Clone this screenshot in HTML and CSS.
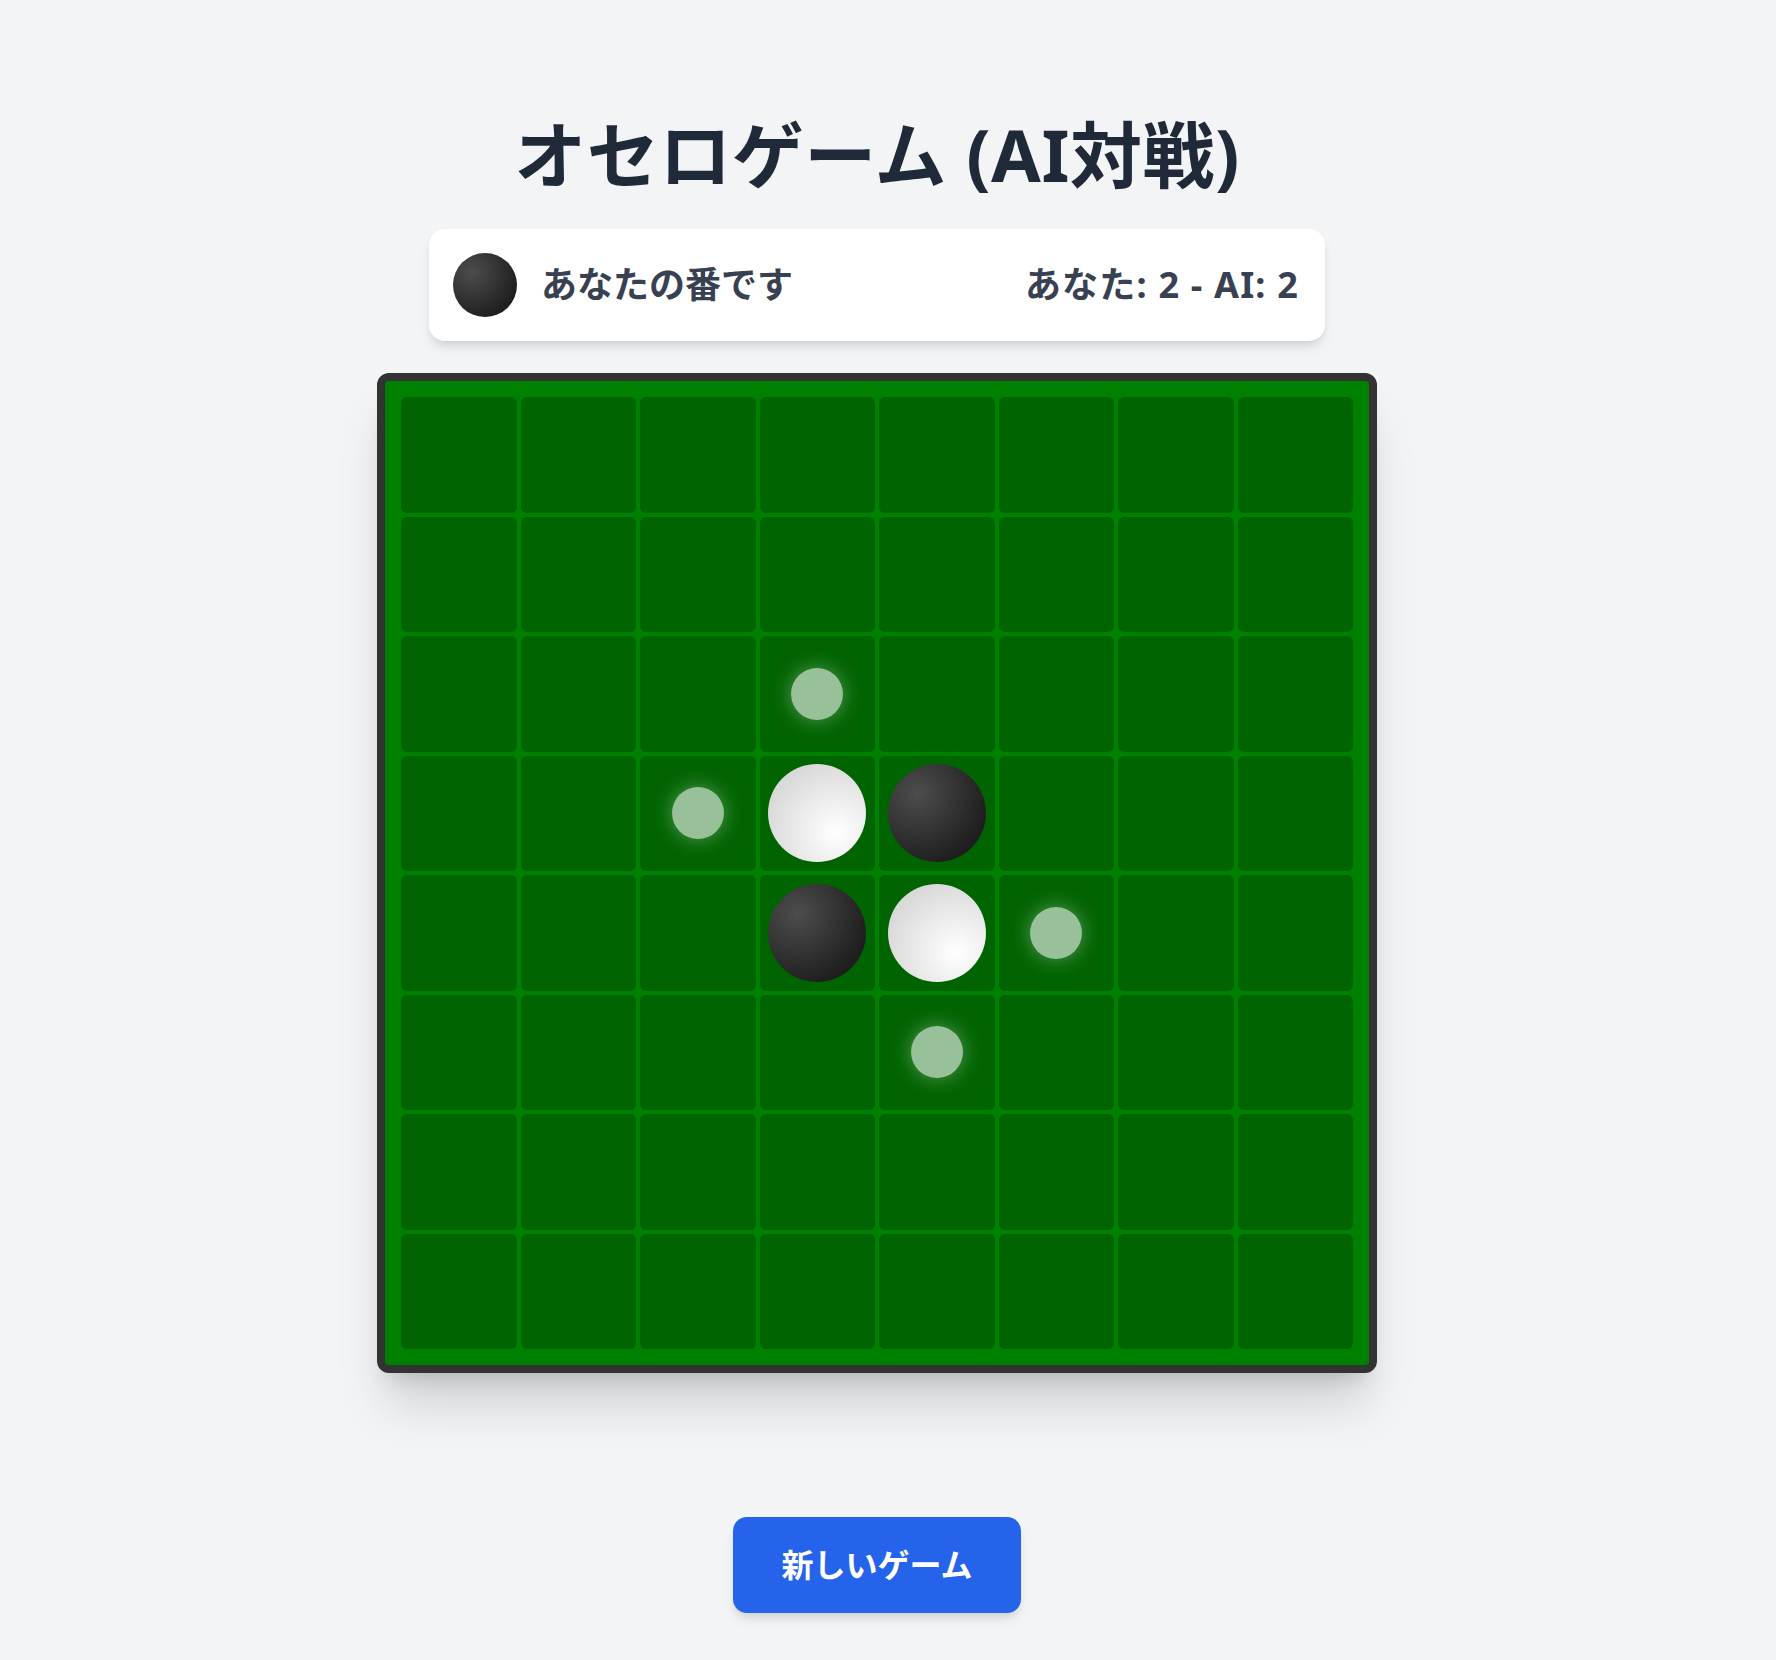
FILE: index.html
```html
<!DOCTYPE html>
<html lang="ja">
<head>
<meta charset="utf-8">
<title>オセロゲーム (AI対戦)</title>
<link rel="stylesheet" href="styles.css">
</head>
<body>
<main class="app">
  <h1 class="title">オセロゲーム (AI対戦)</h1>
  <div class="status">
    <div class="status-left">
      <span class="turn-piece"></span>
      <span class="status-text">あなたの番です</span>
    </div>
    <div class="score">あなた: 2 - AI: 2</div>
  </div>
  <div class="board">
    <div class="cell"></div><div class="cell"></div><div class="cell"></div><div class="cell"></div><div class="cell"></div><div class="cell"></div><div class="cell"></div><div class="cell"></div>
    <div class="cell"></div><div class="cell"></div><div class="cell"></div><div class="cell"></div><div class="cell"></div><div class="cell"></div><div class="cell"></div><div class="cell"></div>
    <div class="cell"></div><div class="cell"></div><div class="cell"></div><div class="cell"><span class="hint"></span></div><div class="cell"></div><div class="cell"></div><div class="cell"></div><div class="cell"></div>
    <div class="cell"></div><div class="cell"></div><div class="cell"><span class="hint"></span></div><div class="cell"><span class="piece white"></span></div><div class="cell"><span class="piece black"></span></div><div class="cell"></div><div class="cell"></div><div class="cell"></div>
    <div class="cell"></div><div class="cell"></div><div class="cell"></div><div class="cell"><span class="piece black"></span></div><div class="cell"><span class="piece white"></span></div><div class="cell"><span class="hint"></span></div><div class="cell"></div><div class="cell"></div>
    <div class="cell"></div><div class="cell"></div><div class="cell"></div><div class="cell"></div><div class="cell"><span class="hint"></span></div><div class="cell"></div><div class="cell"></div><div class="cell"></div>
    <div class="cell"></div><div class="cell"></div><div class="cell"></div><div class="cell"></div><div class="cell"></div><div class="cell"></div><div class="cell"></div><div class="cell"></div>
    <div class="cell"></div><div class="cell"></div><div class="cell"></div><div class="cell"></div><div class="cell"></div><div class="cell"></div><div class="cell"></div><div class="cell"></div>
  </div>
  <button class="new-game" type="button">新しいゲーム</button>
</main>
</body>
</html>
```
FILE: styles.css
```css
* {
  box-sizing: border-box;
}

html, body {
  margin: 0;
  padding: 0;
}

body {
  background: #f3f4f6;
  font-family: "Noto Sans", "Noto Sans CJK JP", sans-serif;
  min-height: 100vh;
}

.app {
  display: flex;
  flex-direction: column;
  align-items: center;
  padding: 114px 22px 40px 0;
}

.title {
  margin: 0 0 35px;
  font-size: 72px;
  line-height: 80px;
  font-weight: 700;
  color: #1f2937;
  letter-spacing: 0.5px;
}

.status {
  width: 896px;
  background: #ffffff;
  border-radius: 16px;
  padding: 24px 26px 24px 24px;
  display: flex;
  align-items: center;
  justify-content: space-between;
  box-shadow: 0 8px 12px -2px rgba(0, 0, 0, 0.1), 0 4px 8px -4px rgba(0, 0, 0, 0.1);
  margin-bottom: 32px;
}

.status-left {
  display: flex;
  align-items: center;
  gap: 24px;
}

.turn-piece {
  width: 64px;
  height: 64px;
  border-radius: 50%;
  background: radial-gradient(circle at 30% 30%, #4d4d4d, #1e1e1e 75%);
}

.status-text,
.score {
  font-size: 36px;
  line-height: 48px;
  font-weight: 700;
  color: #374151;
}

.score {
  letter-spacing: 1.2px;
}

.board {
  width: 1000px;
  height: 1000px;
  background: #008000;
  border: 8px solid #333333;
  border-radius: 12px;
  padding: 16px;
  display: grid;
  grid-template-columns: repeat(8, 1fr);
  grid-template-rows: repeat(8, 1fr);
  gap: 4px;
  box-shadow: 0 40px 50px -10px rgba(0, 0, 0, 0.15), 0 16px 20px -12px rgba(0, 0, 0, 0.15);
}

.cell {
  background: #006400;
  border-radius: 6px;
  display: flex;
  align-items: center;
  justify-content: center;
}

.piece {
  width: 85%;
  height: 85%;
  border-radius: 50%;
}

.piece.black {
  background: radial-gradient(circle at 30% 30%, #4d4d4d, #1e1e1e 75%);
}

.piece.white {
  background: radial-gradient(circle at 70% 70%, #ffffff, #d9d9d9 75%);
}

.hint {
  width: 45%;
  height: 45%;
  border-radius: 50%;
  background: rgba(255, 255, 255, 0.6);
  box-shadow: 0 0 20px rgba(255, 255, 255, 0.35);
}

.new-game {
  margin-top: 144px;
  background: #2563eb;
  color: #ffffff;
  border: none;
  border-radius: 14px;
  padding: 24px 48px;
  font-family: inherit;
  font-size: 32px;
  line-height: 48px;
  font-weight: 700;
  box-shadow: 0 8px 12px -2px rgba(0, 0, 0, 0.1), 0 4px 8px -4px rgba(0, 0, 0, 0.1);
  cursor: pointer;
}
```
